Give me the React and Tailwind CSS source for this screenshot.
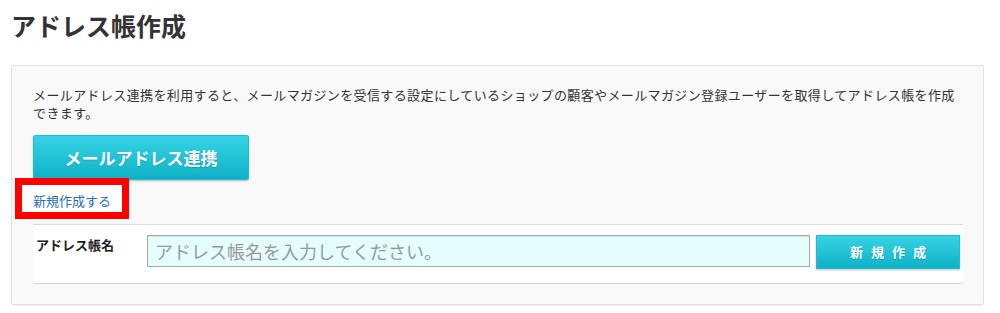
export default function App() {
  const font = { fontFamily: '"Noto Sans CJK JP", "Noto Sans", sans-serif' };
  return (
    <div className="w-[1000px] h-[313px] bg-white text-[#333]" style={font}>
      <div className="pl-[11px] pt-[9px]">
        <h1 className="text-[25px] leading-[32px] font-bold text-[#333]">アドレス帳作成</h1>
      </div>
      <div className="ml-[11px] mt-[24px] w-[973px] border border-[#e2e2e2] rounded-[2px] bg-[#f9f9f9] shadow-[0_1px_1px_rgba(0,0,0,0.06)] pl-[21px] pr-[20px] pt-[20px] pb-[20px]">
        <p className="text-[13px] leading-[18px] tracking-[0.38px] text-[#333]">
          メールアドレス連携を利用すると、メールマガジンを受信する設定にしているショップの顧客やメールマガジン登録ユーザーを取得してアドレス帳を作成できます。
        </p>
        <button className="mt-[13px] w-[216px] h-[45px] rounded-[2px] border border-[#22bccf] bg-gradient-to-b from-[#35d3e5] to-[#0bb2c7] shadow-[0_1px_2px_rgba(0,0,0,0.25)] text-white text-[17px] font-bold [text-shadow:0_1px_1px_rgba(0,0,0,0.15)]">
          メールアドレス連携
        </button>
        <div className="relative h-[44px] flex items-center">
          <span className="absolute left-[-18px] top-[-2px] w-[114px] h-[41px] border-[7px] border-[#ff0000] bg-white"></span>
          <a href="#" className="relative -mt-[3px] text-[13px] leading-[18px] text-[#1d6fbf]">新規作成する</a>
        </div>
        <div className="flex items-start border-t border-b border-[#dcdcdc] bg-white pt-[10px] pb-[14px]">
          <div className="w-[114px] pl-[3px] pt-[1px] text-[13px] leading-[18px] font-bold text-[#222]">アドレス帳名</div>
          <input
            type="text"
            placeholder="アドレス帳名を入力してください。"
            className="w-[663px] h-[32px] border border-[#a9a9a9] bg-[#e4fdfd] shadow-[inset_0_1px_1px_rgba(0,0,0,0.1)] px-[7px] text-[18px] placeholder:text-[#999] outline-none"
            style={font}
          />
          <button className="ml-[6px] w-[144px] h-[34px] border border-[#22bccf] bg-gradient-to-b from-[#35d3e5] to-[#0bb2c7] shadow-[0_1px_2px_rgba(0,0,0,0.25)] text-white text-[13px] font-bold tracking-[8px] pl-[8px] [text-shadow:0_1px_1px_rgba(0,0,0,0.15)]">
            新規作成
          </button>
        </div>
      </div>
    </div>
  );
}
